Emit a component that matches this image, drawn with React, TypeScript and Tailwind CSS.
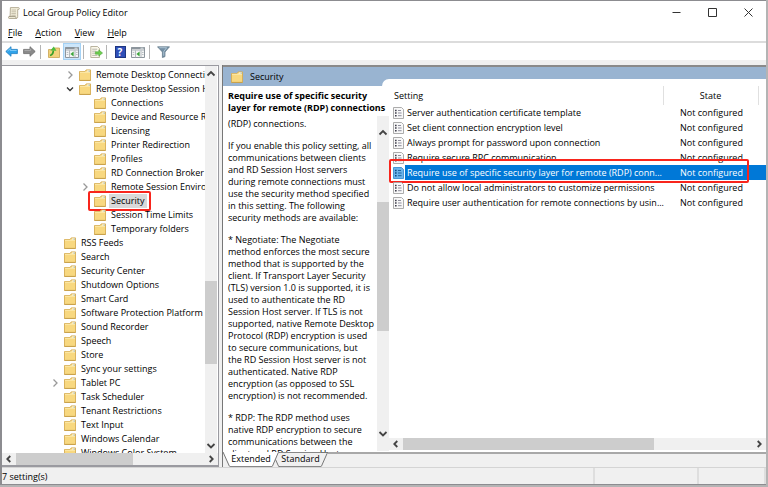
import type { ReactNode } from "react";
import clsx from "clsx";

type TreeItem = { label: string; depth: 1 | 2; arrow?: "open" | "closed"; selected?: boolean };

const treeItems: TreeItem[] = [
  { label: "Remote Desktop Connection Client", depth: 1, arrow: "closed" },
  { label: "Remote Desktop Session Host", depth: 1, arrow: "open" },
  { label: "Connections", depth: 2 },
  { label: "Device and Resource Redirection", depth: 2 },
  { label: "Licensing", depth: 2 },
  { label: "Printer Redirection", depth: 2 },
  { label: "Profiles", depth: 2 },
  { label: "RD Connection Broker", depth: 2 },
  { label: "Remote Session Environment", depth: 2, arrow: "closed" },
  { label: "Security", depth: 2, selected: true },
  { label: "Session Time Limits", depth: 2 },
  { label: "Temporary folders", depth: 2 },
];

const rootItems: { label: string; arrow?: boolean }[] = [
  { label: "RSS Feeds" },
  { label: "Search" },
  { label: "Security Center" },
  { label: "Shutdown Options" },
  { label: "Smart Card" },
  { label: "Software Protection Platform" },
  { label: "Sound Recorder" },
  { label: "Speech" },
  { label: "Store" },
  { label: "Sync your settings" },
  { label: "Tablet PC", arrow: true },
  { label: "Task Scheduler" },
  { label: "Tenant Restrictions" },
  { label: "Text Input" },
  { label: "Windows Calendar" },
  { label: "Windows Color System" },
];

const settings = [
  { name: "Server authentication certificate template" },
  { name: "Set client connection encryption level" },
  { name: "Always prompt for password upon connection" },
  { name: "Require secure RPC communication" },
  { name: "Require use of specific security layer for remote (RDP) conn...", selected: true },
  { name: "Do not allow local administrators to customize permissions" },
  { name: "Require user authentication for remote connections by usin..." },
];

const paragraphs = [
  ["(RDP) connections."],
  [
    "If you enable this policy setting, all",
    "communications between clients",
    "and RD Session Host servers",
    "during remote connections must",
    "use the security method specified",
    "in this setting. The following",
    "security methods are available:",
  ],
  [
    "* Negotiate: The Negotiate",
    "method enforces the most secure",
    "method that is supported by the",
    "client. If Transport Layer Security",
    "(TLS) version 1.0 is supported, it is",
    "used to authenticate the RD",
    "Session Host server. If TLS is not",
    "supported, native Remote Desktop",
    "Protocol (RDP) encryption is used",
    "to secure communications, but",
    "the RD Session Host server is not",
    "authenticated. Native RDP",
    "encryption (as opposed to SSL",
    "encryption) is not recommended.",
  ],
  [
    "* RDP: The RDP method uses",
    "native RDP encryption to secure",
    "communications between the",
    "client and RD Session Host",
  ],
];

function FolderIcon() {
  return (
    <svg className="w-3 h-3 shrink-0" viewBox="0 0 12 12" aria-hidden="true">
      <path d="M0.5 2.5h5.5l1.2-1.6h4.3v10.6h-11z" fill="#f8d880" stroke="#d6ad52" strokeWidth="0.9" />
      <path d="M7.4 2.6l0.9-1h2.7v1z" fill="#fff" />
      <path d="M9.6 1.7h1.4v0.9h-1.4z" fill="#6fa3c4" />
      <path d="M1 3.3h10" stroke="#fdedb8" strokeWidth="0.8" />
      <path d="M0.5 11.4h11" stroke="#c39b46" strokeWidth="0.8" />
    </svg>
  );
}

function Chevron({ dir, className }: { dir: "up" | "down" | "left" | "right"; className?: string }) {
  const paths = {
    up: "M1.5 6.5L5 3l3.5 3.5",
    down: "M1.5 3L5 6.5L8.5 3",
    left: "M6.3 2L3.3 5l3 3",
    right: "M3.7 2l3 3l-3 3",
  };
  return (
    <svg className={clsx("w-2.5 h-2.5 shrink-0", className)} viewBox="0 0 10 10" fill="none" stroke="currentColor" strokeWidth="1.8" aria-hidden="true">
      <path d={paths[dir]} />
    </svg>
  );
}

function TreeArrow({ kind }: { kind?: "open" | "closed" }) {
  return (
    <span className="w-[14px] shrink-0 flex justify-center">
      {kind && (
        <svg className={clsx("w-2.5 h-2.5", kind === "open" ? "text-[#333]" : "text-[#999]")} viewBox="0 0 10 10" fill="none" stroke="currentColor" strokeWidth="1.3">
          <path d={kind === "open" ? "M2 3.5l3 3l3-3" : "M3.5 1.5L7 5L3.5 8.5"} />
        </svg>
      )}
    </span>
  );
}

function SettingIcon({ selected }: { selected?: boolean }) {
  return (
    <svg className="w-[11px] h-3 shrink-0" viewBox="0 0 11 12" aria-hidden="true">
      <path d="M0.5 0.5h8l2 2v9h-10z" fill={selected ? "#6cb4ea" : "#f8f8f8"} stroke={selected ? "#3b8fd0" : "#a3a3a3"} strokeWidth="0.9" />
      <path d="M2 3.5h1.6M2 6h1.6M2 8.7h1.6" stroke={selected ? "#0d4a80" : "#3f3f4c"} strokeWidth="1.5" />
      <path d="M5 3.5h3M5 6h3.6M5 8.7h3.6" stroke={selected ? "#1c62a0" : "#8d8d9c"} strokeWidth="1" />
    </svg>
  );
}

function ToolButton({ label, active, children }: { label: string; active?: boolean; children: ReactNode }) {
  return (
    <button
      type="button"
      aria-label={label}
      className={clsx(
        "w-[18px] h-[17px] flex items-center justify-center",
        active && "bg-[#cce6fb] border border-[#a5d2f5]"
      )}
    >
      {children}
    </button>
  );
}

function Separator() {
  return <span className="w-px h-[14px] ml-0.5 mr-1 bg-[#b4b4b4]" />;
}

function PaneIcon() {
  return (
    <svg className="w-[14px] h-3 shrink-0" viewBox="0 0 14 12" aria-hidden="true">
      <path d="M0.5 1.5h13v10h-13z" fill="#f6f6f6" stroke="#8c959c" />
      <path d="M0.5 1h13v2.4h-13z" fill="#8c959c" />
      <path d="M9.5 2.2h3" stroke="#e8eef2" strokeWidth="0.9" />
      <path d="M1 4.6h12" stroke="#bcc3c8" strokeWidth="0.8" />
      <path d="M4.5 4.5v7M10 4.5v7" stroke="#a3abb0" strokeWidth="0.8" />
      <path d="M1.7 6.5h1.6M1.7 8.5h1.6M11 6.5h1.6M11 8.5h1.6" stroke="#aab2b8" strokeWidth="0.8" />
      <path d="M8.6 5.5v5L5.4 8z" fill="#3aa53a" />
    </svg>
  );
}

function TitleBar() {
  return (
    <header className="flex items-center h-[23px] bg-white">
      <svg className="ml-1.5 w-3 h-3" viewBox="0 0 12 12" aria-hidden="true">
        <path d="M2.4 0.6h8.2c0.9 0 0.9 1.9 0 1.9h-0.9v7.2c0 1-0.5 1.8-1.3 1.8H1.2c-1 0-1-2.1 0-2.1h0.9z" fill="#f4efdc" stroke="#a49c83" strokeWidth="0.8" />
        <path d="M3.6 3h4.4M3.5 4.8h4.5M3.4 6.6h4.5M3.3 8.3h4.4" stroke="#b8b09a" strokeWidth="0.8" />
        <path d="M1.2 9.6h6.2c0.6 0 0.6 1.8 1 1.8" fill="none" stroke="#8d8670" strokeWidth="0.8" />
      </svg>
      <h1 className="ml-[3px] leading-3">Local Group Policy Editor</h1>
      <div className="ml-auto flex text-[#333]">
        <button type="button" aria-label="Minimize" className="w-9 h-[22px] flex items-center justify-center">
          <svg className="w-[9px] h-[9px]" viewBox="0 0 9 9"><path d="M0.5 4.5h8" stroke="currentColor" /></svg>
        </button>
        <button type="button" aria-label="Maximize" className="w-9 h-[22px] flex items-center justify-center">
          <svg className="w-[9px] h-[9px]" viewBox="0 0 9 9"><path d="M0.5 0.5h8v8h-8z" fill="none" stroke="currentColor" /></svg>
        </button>
        <button type="button" aria-label="Close" className="w-9 h-[22px] flex items-center justify-center">
          <svg className="w-[9px] h-[9px]" viewBox="0 0 9 9"><path d="M0.5 0.5l8 8M8.5 0.5l-8 8" stroke="currentColor" /></svg>
        </button>
      </div>
    </header>
  );
}

function Toolbar() {
  return (
    <div className="flex items-center h-[17px] bg-white">
      <ToolButton label="Back">
        <svg className="w-[13px] h-[11px]" viewBox="0 0 13 11">
          <path d="M6 0.7L0.8 5.5L6 10.3V7.6h6.4V3.4H6z" fill="#2fa3ea" stroke="#1b7cc2" strokeWidth="0.8" />
          <path d="M2.4 5.2L5.2 2.6v1.9h6.4" fill="none" stroke="#8fd3fb" strokeWidth="0.8" />
        </svg>
      </ToolButton>
      <ToolButton label="Forward">
        <svg className="w-[13px] h-[11px]" viewBox="0 0 13 11">
          <path d="M7 0.7l5.2 4.8L7 10.3V7.6H0.6V3.4H7z" fill="#8a8a8a" stroke="#6a6a6a" strokeWidth="0.8" />
          <path d="M1.4 4.4h6.2V2.6" fill="none" stroke="#b5b5b5" strokeWidth="0.8" />
        </svg>
      </ToolButton>
      <Separator />
      <ToolButton label="Up one level">
        <svg className="w-3 h-3" viewBox="0 0 12 12">
          <path d="M0.5 3.5h5l1-1.5h5v9.5h-11z" fill="#f3d27c" stroke="#c9a351" strokeWidth="0.8" />
          <path d="M2 9.5C4.4 8.6 5.3 6.6 5.3 4.4" fill="none" stroke="#37a02c" strokeWidth="1.7" />
          <path d="M2.4 4.6L5.8 0.4l2.7 4.4z" fill="#4dbb3c" />
        </svg>
      </ToolButton>
      <ToolButton label="Show/Hide Console Tree" active>
        <PaneIcon />
      </ToolButton>
      <Separator />
      <button type="button" aria-label="Export List" className="w-4 h-[17px] flex items-center justify-center">
        <svg className="w-[13px] h-3" viewBox="0 0 13 12">
          <path d="M0.8 0.5h6.7l2 2v9H0.8z" fill="#fbf8ea" stroke="#a8a28a" strokeWidth="0.8" />
          <path d="M2.2 3.2h5M2.2 5.2h4M2.2 7.2h3M2.2 9.4h5.2" stroke="#a7a7a0" strokeWidth="0.8" />
          <path d="M5.4 5.8h3.4V3.9L12.6 7L8.8 10.1V8.2H5.4z" fill="#6fce4f" stroke="#3d9c2d" strokeWidth="0.5" />
        </svg>
      </button>
      <Separator />
      <ToolButton label="Help">
        <span className="w-[11px] h-3 bg-[#2f4fb8] border border-[#1f3680] text-white font-bold text-[10px] leading-[10px] text-center">?</span>
      </ToolButton>
      <ToolButton label="Show/Hide Action Pane">
        <PaneIcon />
      </ToolButton>
      <Separator />
      <ToolButton label="Filter">
        <svg className="w-[13px] h-3" viewBox="0 0 13 12">
          <path d="M0.5 0.8h12L8 6v4.6l-2.6 1V6z" fill="#7590a5" stroke="#5c7485" strokeWidth="0.7" />
          <path d="M2.3 1.7h7.4L6.8 5.4v4.4" fill="none" stroke="#b4cbd9" strokeWidth="0.9" />
        </svg>
      </ToolButton>
    </div>
  );
}

function HScroll({ thumb }: { thumb: string }) {
  return (
    <div className="flex items-center h-3 bg-[#f0f0f0] text-[#444] shrink-0">
      <span className="w-[14px] flex justify-center"><Chevron dir="left" /></span>
      <div className="flex-1 h-3">
        <div className={clsx("h-3 bg-[#cdcdcd]", thumb)} />
      </div>
      <span className="w-[14px] flex justify-center"><Chevron dir="right" /></span>
    </div>
  );
}

function Tree() {
  return (
    <nav aria-label="Console tree" className="w-[217px] shrink-0 flex flex-col bg-white border-t border-r border-b-2 border-[#9a9aa0]">
      <div className="flex-1 min-h-0 flex pr-px">
        <ul className="flex-1 min-w-0 overflow-hidden pt-0.5">
          {treeItems.map((item) => (
            <li key={item.label} className={clsx("h-[14px] flex items-center", item.depth === 1 ? "pl-[61px]" : "pl-[76px]")}>
              <TreeArrow kind={item.arrow} />
              <span className="relative ml-0.5 flex items-center gap-[3px]">
                <FolderIcon />
                <span className={clsx("px-0.5 leading-[14px] whitespace-nowrap", item.selected && "bg-[#d9d9d9]")}>{item.label}</span>
                {item.selected && (
                  <span className="absolute -left-1.5 -right-1 -top-[3px] -bottom-[3px] border-2 border-[#f8251c] rounded-xs" />
                )}
              </span>
            </li>
          ))}
          {rootItems.map((item) => (
            <li key={item.label} className="h-[14px] flex items-center pl-[46px]">
              <TreeArrow kind={item.arrow ? "closed" : undefined} />
              <span className="ml-0.5 flex items-center gap-[3px]">
                <FolderIcon />
                <span className="px-0.5 leading-[14px] whitespace-nowrap">{item.label}</span>
              </span>
            </li>
          ))}
        </ul>
        <div className="w-3 shrink-0 flex flex-col items-center justify-between bg-[#f0f0f0] text-[#444]">
          <Chevron dir="up" className="mt-[3px]" />
          <div className="flex-1 w-full flex flex-col">
            <div className="flex-[201]" />
            <div className="flex-[82] bg-[#cdcdcd]" />
            <div className="flex-[77]" />
          </div>
          <Chevron dir="down" className="mb-0.5" />
        </div>
      </div>
      <HScroll thumb="w-[62%]" />
    </nav>
  );
}

function Description() {
  return (
    <section className="w-[166px] shrink-0 flex flex-col min-h-0 pt-1">
      <h2 className="pl-[5px] pb-0.5 font-bold leading-3 whitespace-nowrap">
        Require use of specific security
        <br />
        layer for remote (RDP) connections
      </h2>
      <div className="flex-1 min-h-0 flex">
        <div className="flex-1 min-w-0 overflow-hidden pl-[5px] whitespace-nowrap leading-3">
          <div className="h-0.5 flex items-end overflow-hidden">of a secure channel for remote</div>
          {paragraphs.map((lines, i) => (
            <p key={i} className={clsx(i > 0 && "mt-2.5")}>
              {lines.map((line) => (
                <span key={line} className="block">{line}</span>
              ))}
            </p>
          ))}
        </div>
        <div className="w-3 shrink-0 mb-px flex flex-col items-center bg-[#f0f0f0] text-[#444]">
          <Chevron dir="up" className="mt-3" />
          <div className="flex-1 w-full flex flex-col">
            <div className="flex-[64]" />
            <div className="flex-[130] bg-[#cdcdcd]" />
            <div className="flex-[98]" />
          </div>
          <Chevron dir="down" className="mb-3" />
        </div>
      </div>
    </section>
  );
}

function SettingsList() {
  return (
    <section className="flex-1 min-w-0 flex flex-col">
      <table className="w-full table-fixed border-collapse">
        <colgroup>
          <col />
          <col className="w-[95px]" />
          <col className="w-2" />
        </colgroup>
        <thead>
          <tr className="h-[19px]">
            <th scope="col" className="p-0 pl-[5px] text-left font-normal leading-3 border-r border-[#e0e0e0]">Setting</th>
            <th scope="col" className="p-0 text-center font-normal leading-3 border-r border-[#e0e0e0]">State</th>
            <td />
          </tr>
        </thead>
        <tbody>
          {settings.map((s) => (
            <tr key={s.name} className="h-[15px]">
              <td className="p-0">
                <div className="relative flex items-center h-[15px] pl-1">
                  <SettingIcon selected={s.selected} />
                  <span className={clsx("ml-px pl-0.5 flex-1 leading-[15px] whitespace-nowrap", s.selected && "bg-[#0078d7] text-white")}>{s.name}</span>
                  {s.selected && (
                    <span className="absolute left-0 -right-[86px] -top-[6px] -bottom-[3px] border-2 border-[#f8251c] rounded-xs" />
                  )}
                </div>
              </td>
              <td className={clsx("p-0 pl-[17px] leading-[15px] whitespace-nowrap", s.selected && "bg-[#0078d7] text-white")}>Not configured</td>
              <td className={clsx("p-0", s.selected && "bg-[#0078d7]")} />
            </tr>
          ))}
        </tbody>
      </table>
      <div className="mt-auto mb-0.5">
        <HScroll thumb="w-[72%]" />
      </div>
    </section>
  );
}

function ViewTabs() {
  return (
    <div role="tablist" className="flex h-[15px] bg-[#f0f0f0]">
      <svg className="w-[7px] h-[15px] shrink-0" viewBox="0 0 7 15">
        <path d="M0 0h7v14z" fill="#fff" />
        <path d="M0 0l6.5 14.5" stroke="#777" fill="none" />
      </svg>
      <button type="button" role="tab" aria-selected="true" className="w-[42px] bg-white border-b border-[#888] leading-[14px] whitespace-nowrap flex justify-center">
        Extended
      </button>
      <svg className="w-2 h-[15px] shrink-0" viewBox="0 0 8 15">
        <path d="M0 0h6L0 14z" fill="#fff" />
        <path d="M0.3 14.5L6.3 0.5H8M3.5 7.5l3.2 7H8" stroke="#777" fill="none" />
      </svg>
      <button type="button" role="tab" aria-selected="false" className="w-[41px] border-b border-t border-[#888] leading-3 whitespace-nowrap flex justify-center">
        Standard
      </button>
      <svg className="w-[7px] h-[15px] shrink-0" viewBox="0 0 7 15">
        <path d="M0 0.5h7M0.3 14.5L6.5 0.5" stroke="#777" fill="none" />
      </svg>
      <div className="flex-1 border-t-2 border-[#a8a8a8]" />
    </div>
  );
}

export default function App() {
  return (
    <div className="h-screen flex flex-col bg-[#b4b4b4] font-['Open_Sans','Noto_Sans',sans-serif] text-[9px] text-black pb-0.5 pr-0.5 overflow-hidden">
      <div className="flex-1 min-h-0 flex flex-col bg-[#f0f0f0] border-t border-l-2 border-b border-[#8c8c90]">
        <TitleBar />
        <div role="menubar" className="flex items-center gap-[13px] h-[17px] pl-1.5 bg-white">
          {["File", "Action", "View", "Help"].map((m) => (
            <button key={m} type="button" role="menuitem" className="leading-3">
              <span className="underline">{m[0]}</span>
              {m.slice(1)}
            </button>
          ))}
        </div>
        <div className="h-0.5 bg-[#dcdcdc]" />
        <Toolbar />
        <main className="flex-1 min-h-0 flex gap-[3px] pt-[5px]">
          <Tree />
          <div className="flex-1 min-w-0 flex flex-col border-l border-[#777]">
            <div className="flex-1 min-h-0 flex flex-col bg-white border-t-2 border-[#8a8a8a]">
              <div className="flex h-[19px] bg-[#99b4d1]">
                <div className="w-[159px] flex items-center pl-2 gap-[7px]">
                  <FolderIcon />
                  <span className="leading-3">Security</span>
                </div>
                <div className="flex-1 mt-3 bg-white rounded-tl-lg" />
              </div>
              <div className="flex-1 min-h-0 flex">
                <Description />
                <SettingsList />
              </div>
            </div>
            <ViewTabs />
          </div>
        </main>
        <footer className="flex h-[17px] border-t border-[#d4d4d4]">
          <span className="flex-1 leading-[17px] border-r-2 border-[#dedede]">7 setting(s)</span>
          <span className="w-[104px] border-r-2 border-[#dedede]" />
          <span className="w-[67px] border-r-2 border-[#dedede]" />
        </footer>
      </div>
    </div>
  );
}
